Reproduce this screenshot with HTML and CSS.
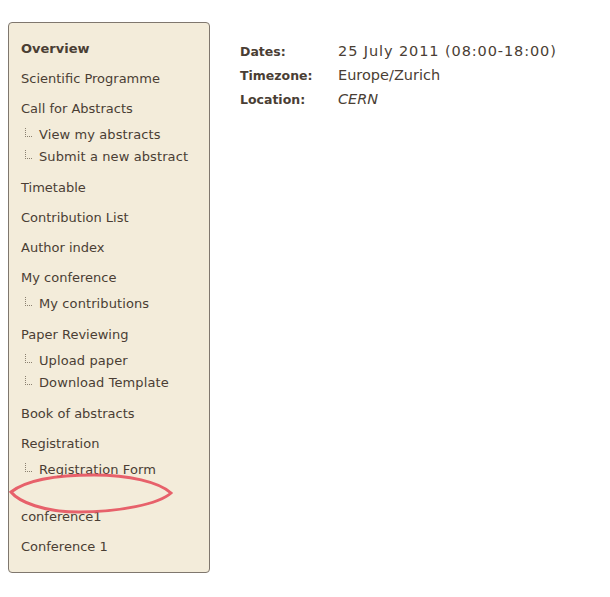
FILE: index.html
```html
<!DOCTYPE html>
<html>
<head>
<meta charset="utf-8">
<link rel="stylesheet" href="styles.css">
</head>
<body>
<div class="page">
  <nav class="menu">
    <ul class="items">
      <li class="item selected">Overview</li>
      <li class="item">Scientific Programme</li>
      <li class="item">Call for Abstracts
        <ul class="subs">
          <li class="sub">View my abstracts</li>
          <li class="sub">Submit a new abstract</li>
        </ul>
      </li>
      <li class="item">Timetable</li>
      <li class="item">Contribution List</li>
      <li class="item">Author index</li>
      <li class="item">My conference
        <ul class="subs">
          <li class="sub">My contributions</li>
        </ul>
      </li>
      <li class="item">Paper Reviewing
        <ul class="subs">
          <li class="sub">Upload paper</li>
          <li class="sub">Download Template</li>
        </ul>
      </li>
      <li class="item">Book of abstracts</li>
      <li class="item">Registration
        <ul class="subs">
          <li class="sub">Registration Form</li>
        </ul>
      </li>
      <li class="item empty"></li>
      <li class="item">conference1</li>
      <li class="item">Conference 1</li>
    </ul>
    <svg class="mark" width="170" height="48" viewBox="0 0 170 48">
      <defs>
        <filter id="soft" x="-5%" y="-20%" width="110%" height="140%">
          <feGaussianBlur stdDeviation="0.6"/>
        </filter>
      </defs>
      <path d="M2 22 C 20 8, 55 5, 85 5 C 120 5, 150 12, 162 23 C 150 34, 110 42, 70 42 C 35 42, 10 32, 2 22 Z" fill="none" stroke="#e6525e" stroke-width="3" opacity="0.9" filter="url(#soft)"/>
    </svg>
  </nav>
  <div class="info">
    <div class="row"><span class="label">Dates:</span><span class="value date">25 July 2011 (08:00-18:00)</span></div>
    <div class="row"><span class="label">Timezone:</span><span class="value">Europe/Zurich</span></div>
    <div class="row"><span class="label">Location:</span><span class="value loc">CERN</span></div>
  </div>
</div>
</body>
</html>
```
FILE: styles.css
```css
html, body { margin: 0; padding: 0; background: #fff; }
body { font-family: "DejaVu Sans", Verdana, sans-serif; color: #4a3e34; }
.page { display: flex; align-items: flex-start; padding: 22px 0 0 8px; }
.menu {
  position: relative;
  width: 200px;
  background: #f3ecda;
  border: 1px solid #7f776e;
  border-radius: 4px;
  padding: 11px 0 10px 0;
}
.items, .subs { list-style: none; margin: 0; padding: 0; }
.item { font-size: 13px; line-height: 16px; padding: 7px 0 7px 12px; }
.item.selected { font-weight: bold; }
.item.empty { height: 2px; }
.subs { margin-top: 7px; margin-bottom: -2px; }
.sub {
  line-height: 16px;
  padding: 3px 0 3px 18px;
  position: relative;
  letter-spacing: 0.1px;
}
.sub::before {
  content: "";
  position: absolute;
  left: 4px; top: 4px;
  width: 6px; height: 8px;
  border-left: 1px dotted #8a8070;
  border-bottom: 1px dotted #8a8070;
}
.mark { position: absolute; left: 0; top: 447px; }
.info { padding: 21px 0 0 30px; }
.row { display: flex; align-items: baseline; height: 24px; }
.label { width: 98px; font-weight: bold; font-size: 12.5px; }
.value { font-size: 14.5px; }
.date { letter-spacing: 0.9px; }
.loc { font-style: italic; }
```
